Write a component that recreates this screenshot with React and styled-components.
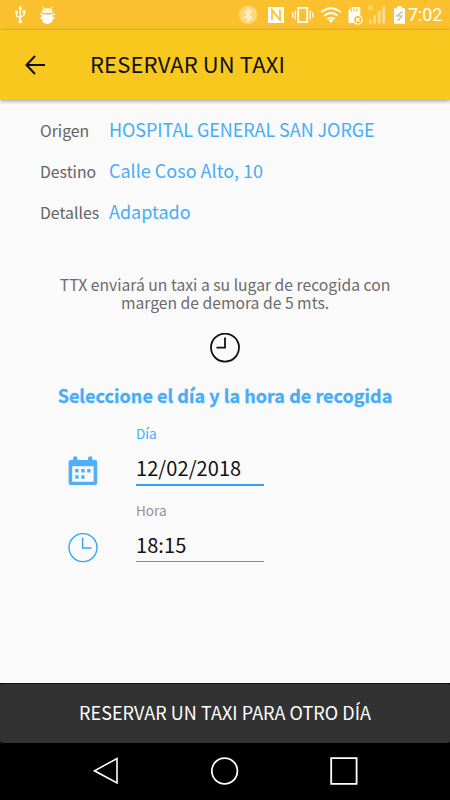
import React, { useState } from "react";
import styled, { createGlobalStyle, ThemeProvider } from "styled-components";

const theme = {
    yellow: "#f8c81e",
    statusYellow: "#fbc02d",
    blue: "#46adf8",
    grey: "#636363",
    background: "#fafafa",
    dark: "#323232",
};

const trip = [
    { label: "Origen", value: "HOSPITAL GENERAL SAN JORGE", spacing: "-0.07px" },
    { label: "Destino", value: "Calle Coso Alto, 10", spacing: "0px" },
    { label: "Detalles", value: "Adaptado", spacing: "0px" },
];

const StatusIcons = () => (
    <StatusDrawing viewBox="0 0 408 30" fill="none" stroke="#fff">
        {/* usb */}
        <path d="M20.3 8V22M16.5 12.5V16L20 18M24 11.5V15L20.5 17" strokeWidth="1.3" />
        <path d="M18.3 9.5L20.3 5.5L22.3 9.5Z M15.2 11h2.6v2.6h-2.6z M22.8 10.3h2.6v2.6h-2.6z" fill="#fff" stroke="none" />
        <circle cx="20.3" cy="21.6" r="1.8" fill="#fff" stroke="none" />
        {/* debug */}
        <path d="M42 12.8Q42 8.2 47.4 8.2T52.8 12.8Z M41.8 14.6H53V18Q52.4 23.8 47.4 24Q42.4 23.8 41.8 18Z" fill="#fff" stroke="none" />
        <path d="M44 9L42.8 7M51 9L52.2 7M40 14.3H42.5M52.5 14.3H55M40.2 18H43M52 18H54.8" strokeWidth="1.3" />
        <path d="M45.1 10.5h1M48.9 10.5h1" stroke="#fbc02d" />
        {/* bluetooth */}
        <circle cx="248" cy="14.7" r="9.2" fill="#fdd77c" stroke="none" />
        <path d="M244.3 11.2L251.3 17.8L248 20.6V8.8L251.3 11.6L244.3 18.2" stroke="#fff3d6" strokeWidth="1.5" />
        {/* nfc */}
        <path d="M268 7h16v16h-16z" fill="#fff" stroke="none" />
        <path d="M272 20V10L280 20V9.5" stroke="#fbc02d" strokeWidth="1.7" />
        {/* vibration */}
        <path d="M298.2 7.8h9v14.4h-9z" strokeWidth="1.8" />
        <path d="M295.3 10.5v9M292.6 12.5v5M310.2 10.5v9M312.9 12.5v5" strokeWidth="1.3" />
        {/* wifi */}
        <path d="M321.2 12.3Q331 4.3 340.8 12.3M324.3 15.8Q331 10.3 337.7 15.8M327.3 19Q331 16.2 334.7 19" strokeWidth="1.8" />
        <path d="M328.6 20L331 23L333.4 20Q331 18.3 328.6 20Z" fill="#fff" stroke="none" />
        {/* memory card */}
        <path d="M348.5 10.5L352 7H359.3Q360.3 7 360.3 8V23H349.5Q348.5 23 348.5 22Z" fill="#fff" stroke="none" />
        <path d="M351.3 8.5V11.5M354 8.5V11.5M356.8 8.5V11.5" stroke="#fbc02d" strokeWidth="1.2" />
        <circle cx="357.8" cy="19.8" r="4.3" fill="#fbc02d" strokeWidth="1.2" />
        <path d="M356 18L359.6 21.6M359.6 18L356 21.6" strokeWidth="1.2" />
        {/* signal */}
        <path d="M370.3 19.5V23.5M374.6 15.5V23.5M379.2 11V23.5M383.7 6.5V23.5" stroke="#fddb88" strokeWidth="2.8" />
        <path d="M368.5 6L372.5 10M372.5 6L368.5 10" stroke="#fddf96" strokeWidth="1.3" />
        {/* battery */}
        <path d="M394 8.2H397V6.3H402V8.2H405V23.8H394Z" fill="#fff" stroke="none" />
        <path d="M402.5 11.5L397 16H402L397.6 20.8" stroke="#c9b68c" strokeWidth="1.2" />
    </StatusDrawing>
);

const Clock = ({ color, hand, width }) => (
    <svg width="30" height="30" viewBox="0 0 30 30" fill="none" stroke={color} strokeWidth={width}>
        <circle cx="15" cy="14.6" r="14" />
        <path d={hand} />
    </svg>
);

const Calendar = () => (
    <svg width="30" height="30" viewBox="0 0 30 30" fill="#50aff8">
        <path
            fillRule="evenodd"
            d="M2.6 4H5V2.5A2.2 2.2 0 0 1 9.4 2.5V4H20V2.5A2.2 2.2 0 0 1 24.4 2.5V4H27.2Q29.2 4 29.2 6V27Q29.2 29 27.2 29H2.6Q.6 29 .6 27V6Q.6 4 2.6 4ZM4.2 10.3V25.8H25.6V10.3Z"
        />
        <path d="M7.2 13.1H10.6V16.5H7.2ZM13.2 13.1H16.6V16.5H13.2ZM19.2 13.1H22.6V16.5H19.2ZM7.2 19.3H10.6V22.7H7.2ZM13.2 19.3H16.6V22.7H13.2Z" />
    </svg>
);

const App = () => {
    const [day, setDay] = useState("12/02/2018");
    const [hour, setHour] = useState("18:15");

    return (
        <ThemeProvider theme={theme}>
            <GlobalStyle />
            <Screen>
                <StatusBar>
                    <StatusIcons />
                    <Time>7:02</Time>
                </StatusBar>
                <AppBar>
                    <svg width="22" height="22" viewBox="0 0 22 22" fill="none" stroke="#111" strokeWidth="2">
                        <path d="M21 11H2.5M11 2L2.5 11L11 20" />
                    </svg>
                    <Title>RESERVAR UN TAXI</Title>
                </AppBar>
                <Content>
                    <TripList>
                        {trip.map(({ label, value, spacing }) => (
                            <TripRow key={label}>
                                <TripLabel>{label}</TripLabel>
                                <TripValue $spacing={spacing}>{value}</TripValue>
                            </TripRow>
                        ))}
                    </TripList>
                    <Notice>
                        <span>TTX enviará un taxi a su lugar de recogida con</span>
                        <span>margen de demora de 5 mts.</span>
                    </Notice>
                    <Clock color="#111" width={1.8} hand="M15 4.5V14.6H6.5" />
                    <Heading>Seleccione el día y la hora de recogida</Heading>
                    <Form>
                        <FieldRow>
                            <Calendar />
                            <Field>
                                <FieldLabel $active>Día</FieldLabel>
                                <FieldInput $active value={day} onChange={(e) => setDay(e.target.value)} />
                            </Field>
                        </FieldRow>
                        <FieldRow>
                            <Clock color="#35a5f5" width={1.4} hand="M14.6 4.5V15H23.5" />
                            <Field>
                                <FieldLabel>Hora</FieldLabel>
                                <FieldInput value={hour} onChange={(e) => setHour(e.target.value)} />
                            </Field>
                        </FieldRow>
                    </Form>
                </Content>
                <Footer>
                    <SubmitButton>RESERVAR UN TAXI PARA OTRO DÍA</SubmitButton>
                </Footer>
                <NavBar>
                    <svg width="26" height="28" viewBox="0 0 26 28" fill="none" stroke="#fff" strokeWidth="1.6">
                        <path d="M24 1.5V26L1.5 13.8Z" />
                    </svg>
                    <svg width="28" height="28" viewBox="0 0 28 28" fill="none" stroke="#fff" strokeWidth="1.8">
                        <circle cx="13.6" cy="14" r="12.8" />
                    </svg>
                    <svg width="28" height="28" viewBox="0 0 28 28" fill="none" stroke="#fff" strokeWidth="1.8">
                        <path d="M1.2 1.2H26.6V26.8H1.2Z" />
                    </svg>
                </NavBar>
            </Screen>
        </ThemeProvider>
    );
};

export default App;

const GlobalStyle = createGlobalStyle`
    * { box-sizing: border-box; }

    body {
        margin: 0;
        font-family: "Noto Sans CJK SC", "Noto Sans", sans-serif;
    }

    svg { display: block; flex-shrink: 0; }
`;

const Screen = styled.div`
    width: 450px;
    height: 800px;
    display: flex;
    flex-direction: column;
    overflow: hidden;
    background-color: ${({ theme }) => theme.background};
`;

const StatusBar = styled.div`
    height: 30px;
    display: flex;
    align-items: center;
    background-color: ${({ theme }) => theme.statusYellow};
`;

const StatusDrawing = styled.svg`
    width: 408px;
    height: 30px;
`;

const Time = styled.span`
    color: #fff;
    font-family: Roboto, sans-serif;
    font-size: 18px;
    line-height: 30px;
    letter-spacing: -0.1px;
`;

const AppBar = styled.header`
    height: 70px;
    flex-shrink: 0;
    display: flex;
    align-items: center;
    gap: 44px;
    padding-left: 24px;
    background-color: ${({ theme }) => theme.yellow};
    box-shadow: 0 1px 4px rgba(0, 0, 0, 0.4);
    z-index: 1;
`;

const Title = styled.h1`
    margin: 0;
    padding-bottom: 3px;
    color: #111;
    font-size: 22px;
    font-weight: 400;
    line-height: 67px;
    letter-spacing: 0.12px;
    white-space: nowrap;
`;

const Content = styled.main`
    flex: 1;
    display: flex;
    flex-direction: column;
    align-items: center;
    padding-top: 9px;
`;

const TripList = styled.div`
    width: 100%;
    padding-left: 40px;
`;

const TripRow = styled.div`
    height: 41px;
    display: grid;
    grid-template-columns: 69px 1fr;
    align-items: baseline;
    line-height: 41px;
    white-space: nowrap;
`;

const TripLabel = styled.span`
    color: ${({ theme }) => theme.grey};
    font-size: 15.8px;
`;

const TripValue = styled.span`
    color: ${({ theme }) => theme.blue};
    font-size: 18px;
    letter-spacing: ${({ $spacing }) => $spacing};
`;

const Notice = styled.p`
    display: flex;
    flex-direction: column;
    align-items: center;
    margin: 44px 0 21px;
    color: #6b6b6b;
    font-size: 15.7px;
    line-height: 18px;
    white-space: nowrap;
`;

const Heading = styled.h2`
    margin: 17px 0 0;
    color: ${({ theme }) => theme.blue};
    font-size: 18px;
    font-weight: 700;
    line-height: 30px;
    letter-spacing: 0.03px;
    white-space: nowrap;
    -webkit-text-stroke: 0.3px ${({ theme }) => theme.blue};
`;

const Form = styled.div`
    width: 100%;
    padding: 13px 0 0 67.5px;
`;

const FieldRow = styled.div`
    height: 77.4px;
    display: flex;
    align-items: flex-start;
    gap: 38.5px;

    > svg { margin-top: 33px; }
`;

const Field = styled.label`
    width: 128px;
    display: flex;
    flex-direction: column;
`;

const FieldLabel = styled.span`
    color: ${({ $active, theme }) => ($active ? theme.blue : "#929292")};
    font-size: 13.5px;
    line-height: 20px;
`;

const FieldInput = styled.input`
    width: 100%;
    height: ${({ $active }) => ($active ? "42px" : "41px")};
    margin-top: 1px;
    padding: 7px 0 0;
    border: 0;
    border-bottom: ${({ $active }) => ($active ? "2px solid #35a2ef" : "1px solid #888")};
    outline: 0;
    border-radius: 0;
    background: transparent;
    color: #111;
    font-family: inherit;
    font-size: 20px;
    letter-spacing: 0.08px;
`;

const Footer = styled.div`
    height: 60px;
    flex-shrink: 0;
    background-color: #000;
`;

const SubmitButton = styled.button`
    width: 100%;
    height: 60px;
    padding: 0 0 4px;
    border: 0;
    border-top: 1px solid #111;
    border-radius: 2px;
    background-color: ${({ theme }) => theme.dark};
    color: #fff;
    font-family: inherit;
    font-size: 18px;
    letter-spacing: 0.04px;
    white-space: nowrap;
`;

const NavBar = styled.nav`
    height: 57px;
    flex-shrink: 0;
    display: flex;
    align-items: center;
    justify-content: space-between;
    padding: 0 92px 1px 93px;
    background-color: #000;
`;
